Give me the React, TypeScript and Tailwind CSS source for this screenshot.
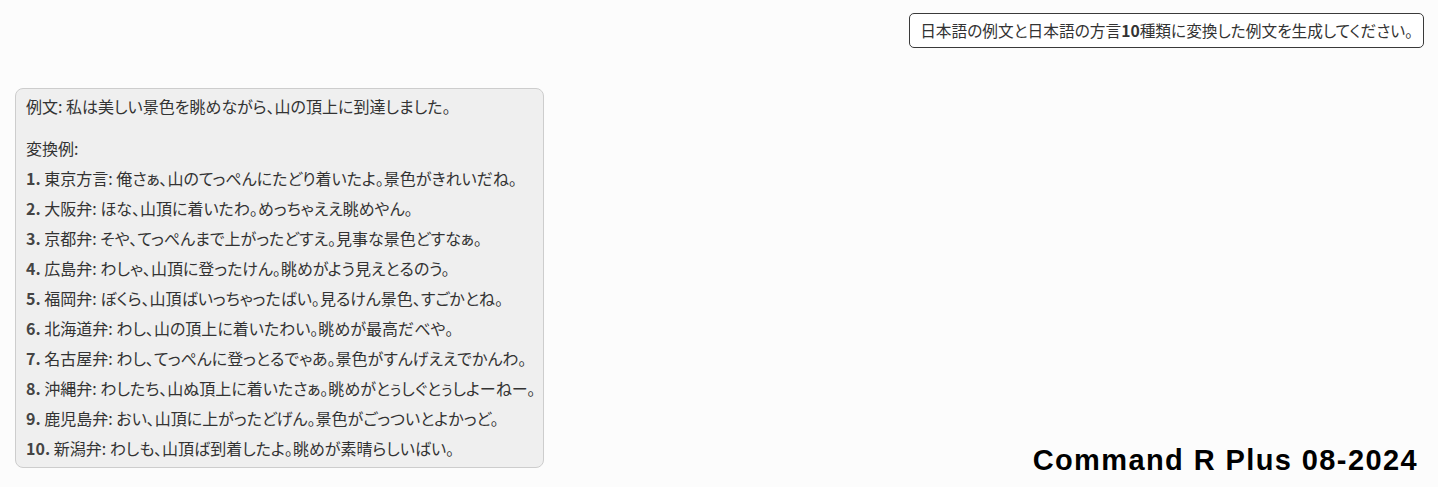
const dialects = [
  ["東京方言", "俺さぁ、山のてっぺんにたどり着いたよ。景色がきれいだね。"],
  ["大阪弁", "ほな、山頂に着いたわ。めっちゃええ眺めやん。"],
  ["京都弁", "そや、てっぺんまで上がったどすえ。見事な景色どすなぁ。"],
  ["広島弁", "わしゃ、山頂に登ったけん。眺めがよう見えとるのう。"],
  ["福岡弁", "ぼくら、山頂ばいっちゃったばい。見るけん景色、すごかとね。"],
  ["北海道弁", "わし、山の頂上に着いたわい。眺めが最高だべや。"],
  ["名古屋弁", "わし、てっぺんに登っとるでゃあ。景色がすんげええでかんわ。"],
  ["沖縄弁", "わしたち、山ぬ頂上に着いたさぁ。眺めがとぅしぐとぅしよーねー。"],
  ["鹿児島弁", "おい、山頂に上がったどげん。景色がごっついとよかっど。"],
  ["新潟弁", "わしも、山頂ば到着したよ。眺めが素晴らしいばい。"],
];

const App = () => {
  return (
    <div
      className="relative h-[487px] w-[1438px] overflow-hidden bg-[#fcfcfc] text-[#333]"
      style={{ fontFamily: '"Noto Sans CJK JP", "Noto Sans", sans-serif' }}
    >
      <div className="flex justify-end pr-[14px] pt-[13px]">
        <div className="rounded-[5px] border border-[#3a3a3a] bg-white px-[10px] py-[6px] text-[15.7px] leading-[21px] [font-feature-settings:'palt']">
          日本語の例文と日本語の方言<span className="font-bold">10</span>種類に変換した例文を生成してください。
        </div>
      </div>

      <div className="ml-[15px] mt-[40px] w-[529px] rounded-[8px] border border-[#cdcdcd] bg-[#efefef] px-[10px] pb-[4px] pt-[2px] text-[16px] leading-[30px] whitespace-nowrap [font-feature-settings:'palt']">
        <p className="mb-[12px]">例文: 私は美しい景色を眺めながら、山の頂上に到達しました。</p>
        <p>変換例:</p>
        <ol>
          {dialects.map(([name, text], i) => (
            <li key={name}>
              <span className="font-bold text-[#444]">{i + 1}.</span> {name}: {text}
            </li>
          ))}
        </ol>
      </div>

      <div
        className="absolute bottom-[12px] right-[20px] text-[29px] font-bold leading-none tracking-[1.4px] text-black"
        style={{ fontFamily: '"Liberation Sans", Arial, sans-serif' }}
      >
        Command R Plus 08-2024
      </div>
    </div>
  );
};

export default App;
